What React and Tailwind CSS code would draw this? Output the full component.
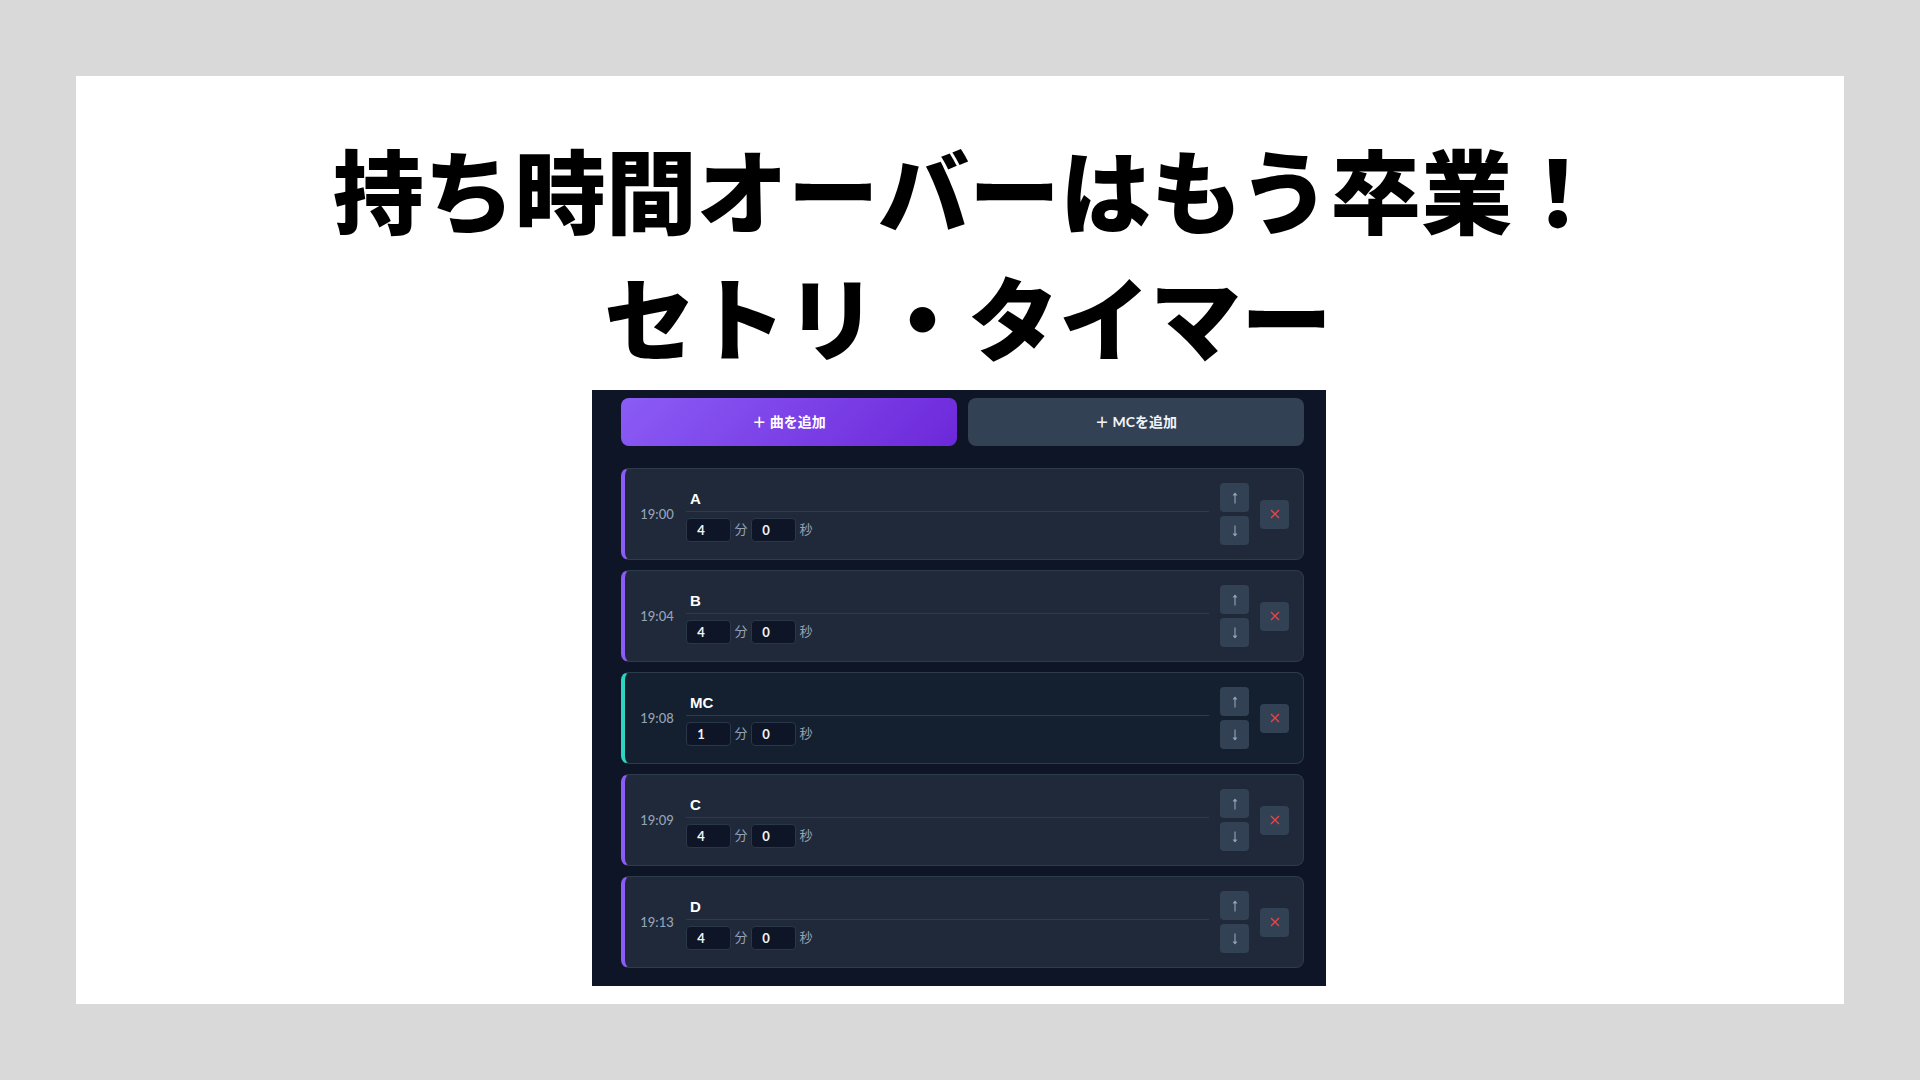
import React, { useState } from 'react';

const START_MINUTES = 19 * 60;

const initialItems = [
  { id: 1, type: 'song', title: 'A', min: 4, sec: 0 },
  { id: 2, type: 'song', title: 'B', min: 4, sec: 0 },
  { id: 3, type: 'mc', title: 'MC', min: 1, sec: 0 },
  { id: 4, type: 'song', title: 'C', min: 4, sec: 0 },
  { id: 5, type: 'song', title: 'D', min: 4, sec: 0 },
];

// Seconds since midnight -> "HH:MM"
function formatClock(seconds) {
  const total = Math.floor(seconds / 60);
  const h = Math.floor(total / 60) % 24;
  const m = total % 60;
  return `${h}:${String(m).padStart(2, '0')}`;
}

function ArrowIcon({ down = false }) {
  return (
    <svg viewBox="0 0 8 12" className={down ? 'h-3 w-2 rotate-180' : 'h-3 w-2'} fill="none" stroke="currentColor">
      <path d="M4 11.5V1" strokeWidth="1.1" />
      <path d="M1.9 3.2L4 0.8L6.1 3.2Z" fill="currentColor" strokeWidth="0.4" />
    </svg>
  );
}

function CloseIcon() {
  return (
    <svg viewBox="0 0 10 10" className="h-2.5 w-2.5" fill="none" stroke="currentColor">
      <path d="M1 1L9 9M9 1L1 9" strokeWidth="1.3" />
    </svg>
  );
}

// Small square button at the right of a row
function IconButton({ label, onClick, className, children }) {
  return (
    <button
      type="button"
      aria-label={label}
      onClick={onClick}
      className={`flex h-[29px] w-[29px] items-center justify-center rounded bg-[#334155] ${className}`}
    >
      {children}
    </button>
  );
}

function DurationInput({ value, unit, max, onChange }) {
  return (
    <label className="flex items-center gap-[3px] text-[13px] text-[#94a3b8]">
      <input
        type="number"
        min="0"
        max={max}
        value={value}
        onChange={(e) => onChange(Number(e.target.value))}
        className="h-6 w-[45px] rounded border border-[#2a3749] bg-[#0d1526] text-center font-[Lato,'Noto_Sans_CJK_JP',sans-serif] text-[13px] font-bold text-[#f1f5f9] outline-none"
      />
      <span className="w-[14px] text-center">{unit}</span>
    </label>
  );
}

function SetlistRow({ item, time, onUpdate, onMove, onRemove }) {
  const tone =
    item.type === 'mc'
      ? 'border-l-[#2dd4bf] bg-[#14202f]'
      : 'border-l-[#8b5cf6] bg-[#1f293a]';

  return (
    <li className={`flex items-center gap-[11px] rounded-lg border border-l-4 border-[#2e3b4d] p-[14px] ${tone}`}>
      <time className="w-9 pt-px text-center text-[13px] font-medium text-[#94a3b8]">{time}</time>

      <div className="min-w-0 flex-1">
        <input
          type="text"
          aria-label="タイトル"
          value={item.title}
          onChange={(e) => onUpdate({ title: e.target.value })}
          className="block h-[25px] w-full border-b border-[#2e3b4d] bg-transparent px-1 pb-px font-['Liberation_Sans','Noto_Sans_CJK_JP',sans-serif] text-[15px] font-bold text-white outline-none"
        />
        <div className="mt-[6px] flex gap-[3px]">
          <DurationInput value={item.min} unit="分" max="99" onChange={(min) => onUpdate({ min })} />
          <DurationInput value={item.sec} unit="秒" max="59" onChange={(sec) => onUpdate({ sec })} />
        </div>
      </div>

      <div className="flex flex-col gap-1">
        <IconButton label="上へ" onClick={() => onMove(-1)} className="text-[#94a3b8]">
          <ArrowIcon />
        </IconButton>
        <IconButton label="下へ" onClick={() => onMove(1)} className="text-[#94a3b8]">
          <ArrowIcon down />
        </IconButton>
      </div>
      <IconButton label="削除" onClick={onRemove} className="text-[#ef4444]">
        <CloseIcon />
      </IconButton>
    </li>
  );
}

function SetlistPanel() {
  const [items, setItems] = useState(initialItems);

  const add = (type) => {
    const id = Math.max(0, ...items.map((i) => i.id)) + 1;
    const isMc = type === 'mc';
    setItems([...items, { id, type, title: isMc ? 'MC' : '', min: isMc ? 1 : 4, sec: 0 }]);
  };

  const update = (id, patch) => setItems(items.map((i) => (i.id === id ? { ...i, ...patch } : i)));

  const move = (index, step) => {
    const target = index + step;
    if (target < 0 || target >= items.length) return;
    const next = [...items];
    [next[index], next[target]] = [next[target], next[index]];
    setItems(next);
  };

  let clock = START_MINUTES * 60;
  const times = items.map((i) => {
    const start = clock;
    clock += i.min * 60 + i.sec;
    return formatClock(start);
  });

  return (
    <section className="w-full max-w-[734px] bg-[#0d1526] pt-2 pr-[22px] pb-[18px] pl-[29px]">
      <div className="grid grid-cols-2 gap-[11px]">
        <button
          type="button"
          onClick={() => add('song')}
          className="h-12 rounded-lg bg-[linear-gradient(135deg,#8b5cf6,#6d28d9)] text-sm font-bold text-white"
        >
          ＋ 曲を追加
        </button>
        <button
          type="button"
          onClick={() => add('mc')}
          className="h-12 rounded-lg bg-[#334155] text-sm font-bold text-[#f1f5f9]"
        >
          ＋ MCを追加
        </button>
      </div>

      <ul className="mt-[22px] flex flex-col gap-[10px]">
        {items.map((item, index) => (
          <SetlistRow
            key={item.id}
            item={item}
            time={times[index]}
            onUpdate={(patch) => update(item.id, patch)}
            onMove={(step) => move(index, step)}
            onRemove={() => setItems(items.filter((i) => i.id !== item.id))}
          />
        ))}
      </ul>
    </section>
  );
}

export default function App() {
  return (
    <div lang="ja" className="flex min-h-screen bg-[#d9d9d9] p-[76px] font-[Lato,'Noto_Sans_CJK_JP',sans-serif]">
      <main className="flex flex-1 flex-col items-center bg-white pt-12 pb-[18px]">
        <h1 className="pl-4 text-center font-['Noto_Sans_CJK_JP',sans-serif] text-[91px] leading-[127px] font-black text-black">
          持ち時間オーバーはもう卒業！
          <br />
          セトリ・タイマー
        </h1>
        <div className="mt-3 flex w-full justify-center pr-[2px]">
          <SetlistPanel />
        </div>
      </main>
    </div>
  );
}
